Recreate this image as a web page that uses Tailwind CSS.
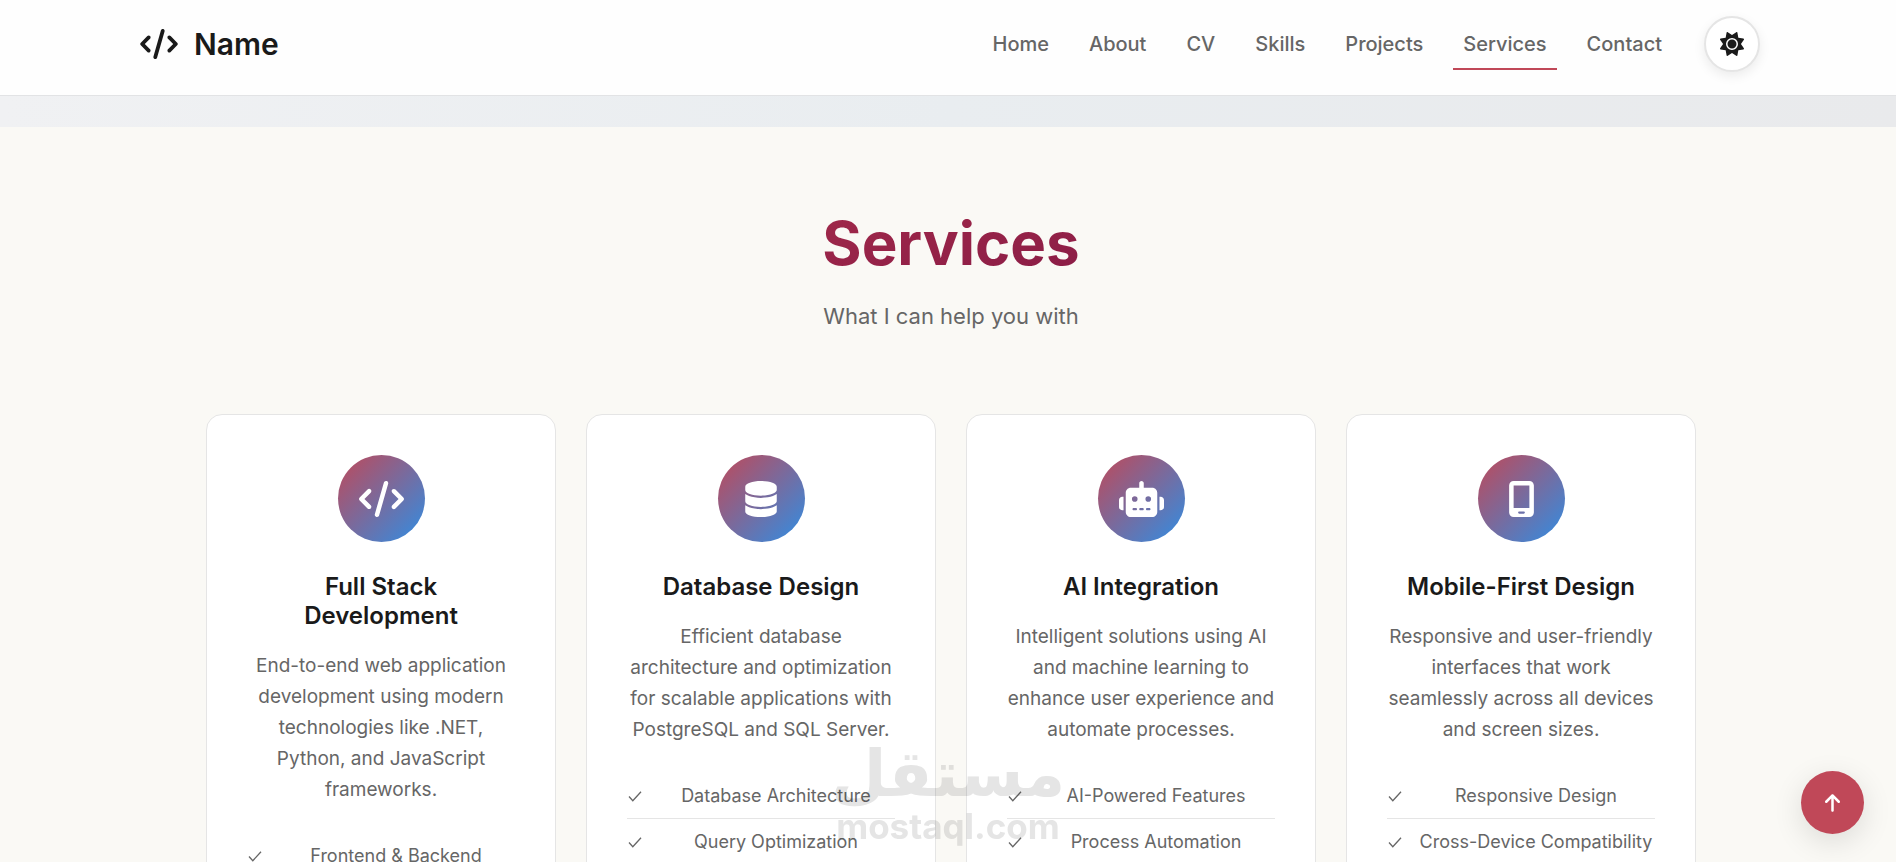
<!DOCTYPE html>
<html lang="en">
<head>
    <meta charset="UTF-8">
    <meta name="viewport" content="width=device-width, initial-scale=1.0">
    <title>Name - Services</title>
    <script src="https://cdn.jsdelivr.net/npm/@tailwindcss/browser@4"></script>
</head>
<body class="min-h-screen bg-[#faf9f5] font-['Inter',sans-serif] text-[#666666]">
    <!-- Icons -->
    <svg class="hidden">
        <symbol id="code" viewBox="0 0 640 512"><path d="M392.8 1.2c-17-4.9-34.7 5-39.6 22l-128 448c-4.9 17 5 34.7 22 39.6s34.7-5 39.6-22l128-448c4.9-17-5-34.7-22-39.6zm80.6 120.1c-12.5 12.5-12.5 32.8 0 45.3L562.7 256l-89.4 89.4c-12.5 12.5-12.5 32.8 0 45.3s32.8 12.5 45.3 0l112-112c12.5-12.5 12.5-32.8 0-45.3l-112-112c-12.5-12.5-32.8-12.5-45.3 0zm-306.7 0c-12.5-12.5-32.8-12.5-45.3 0l-112 112c-12.5 12.5-12.5 32.8 0 45.3l112 112c12.5 12.5 32.8 12.5 45.3 0s12.5-32.8 0-45.3L77.3 256l89.4-89.4c12.5-12.5 12.5-32.8 0-45.3z"/></symbol>
        <symbol id="check" viewBox="0 0 16 16"><path d="M2 8.500l3.800 4.200 8.200-9" fill="none" stroke="currentColor" stroke-width="1.300"/></symbol>
    </svg>

    <!-- Header -->
    <header class="border-b border-[#e2e3e5] bg-[#fefefe] pl-1">
        <div class="mx-auto flex h-[95px] max-w-[1620px] items-center justify-between pb-2">
            <a href="#" class="flex items-center gap-4 text-3xl font-semibold text-[#1a1a1a]">
                <svg class="h-[30px] w-[38px]" fill="currentColor"><use href="#code"/></svg>
                Name
            </a>
            <div class="flex items-center gap-8">
                <nav class="flex gap-5 text-xl font-medium">
                    <a href="#home" class="border-b-2 border-transparent px-[10px] pt-3 pb-[10px]">Home</a>
                    <a href="#about" class="border-b-2 border-transparent px-[10px] pt-3 pb-[10px]">About</a>
                    <a href="#cv" class="border-b-2 border-transparent px-[10px] pt-3 pb-[10px]">CV</a>
                    <a href="#skills" class="border-b-2 border-transparent px-[10px] pt-3 pb-[10px]">Skills</a>
                    <a href="#projects" class="border-b-2 border-transparent px-[10px] pt-3 pb-[10px]">Projects</a>
                    <a href="#services" class="border-b-2 border-[#c04858] px-[10px] pt-3 pb-[10px]">Services</a>
                    <a href="#contact" class="border-b-2 border-transparent px-[10px] pt-3 pb-[10px]">Contact</a>
                </nav>
                <button aria-label="Toggle theme" class="flex size-14 items-center justify-center rounded-full border-2 border-[#e5e5e5] bg-white text-[#1a1a1a] shadow-[0_4px_12px_rgba(0,0,0,0.08)]">
                    <svg class="size-6" viewBox="0 0 512 512" fill="currentColor"><path d="M361.5 1.2c5 2.1 8.6 6.6 9.6 11.9L391 121l107.9 19.8c5.3 1 9.8 4.6 11.9 9.6s1.5 10.7-1.6 15.2L446.9 256l62.3 90.3c3.1 4.5 3.7 10.2 1.6 15.2s-6.6 8.6-11.9 9.6L391 391 371.1 498.9c-1 5.3-4.6 9.8-9.6 11.9s-10.7 1.5-15.2-1.6L256 446.9l-90.3 62.3c-4.5 3.1-10.2 3.7-15.2 1.6s-8.6-6.6-9.6-11.9L121 391 13.1 371.1c-5.3-1-9.8-4.6-11.9-9.6s-1.5-10.7 1.6-15.2L65.1 256 2.8 165.7c-3.1-4.5-3.7-10.2-1.6-15.2s6.6-8.6 11.9-9.6L121 121 140.9 13.1c1-5.3 4.6-9.8 9.6-11.9s10.7-1.5 15.2 1.6L256 65.1 346.3 2.8c4.5-3.1 10.2-3.7 15.2-1.6zM160 256a96 96 0 1 1 192 0 96 96 0 1 1 -192 0zm224 0a128 128 0 1 0 -256 0 128 128 0 1 0 256 0z"/></svg>
                </button>
            </div>
        </div>
    </header>
    <div class="h-[31px] bg-linear-to-r/srgb from-[#f0f1f3] via-[#e9edf0] to-[#e9eaec]"></div>

    <!-- Services -->
    <section id="services" class="py-[80px] pl-[6px]">
        <div class="mx-auto max-w-[1490px]">
            <div class="mb-[80px] text-center">
                <h2 class="mx-auto mb-[20px] w-fit bg-linear-to-br/srgb from-[#a0294a] to-[#8a1c46] bg-clip-text text-[60px] leading-[72px] font-bold text-transparent">Services</h2>
                <p class="text-[22px] leading-[35px]">What I can help you with</p>
            </div>

            <div class="grid grid-cols-4 gap-[30px]">
                <div class="rounded-2xl border border-[#e5e5e5] bg-white p-10 text-center">
                    <div class="mx-auto mb-[30px] flex size-[87px] items-center justify-center rounded-full bg-linear-135/srgb from-[#c04858] to-[#308ee4] text-white">
                        <svg class="h-9 w-[45px]" fill="currentColor"><use href="#code"/></svg>
                    </div>
                    <h3 class="mb-[20px] text-2xl leading-[29px] font-semibold text-[#1a1a1a]">Full Stack Development</h3>
                    <p class="mb-7 text-[19px] leading-[31px]">End-to-end web application development using modern technologies like .NET, Python, and JavaScript frameworks.</p>
                    <ul class="text-lg leading-[29px]">
                        <li class="flex items-center gap-[14px] border-b border-[#e5e5e5] py-2"><svg class="size-4 shrink-0"><use href="#check"/></svg><span class="flex-1">Frontend &amp; Backend</span></li>
                        <li class="flex items-center gap-[14px] py-2"><svg class="size-4 shrink-0"><use href="#check"/></svg><span class="flex-1">API Development</span></li>
                    </ul>
                </div>

                <div class="rounded-2xl border border-[#e5e5e5] bg-white p-10 text-center">
                    <div class="mx-auto mb-[30px] flex size-[87px] items-center justify-center rounded-full bg-linear-135/srgb from-[#c04858] to-[#308ee4] text-white">
                        <svg class="h-9 w-8" viewBox="0 0 448 512" fill="currentColor"><path d="M448 80v48c0 44.2-100.3 80-224 80S0 172.2 0 128V80C0 35.8 100.3 0 224 0S448 35.8 448 80zM393.2 214.7c20.8-7.4 39.9-16.9 54.8-28.6V288c0 44.2-100.3 80-224 80S0 332.2 0 288V186.1c14.9 11.8 34 21.2 54.8 28.6C99.7 230.7 159.5 240 224 240s124.3-9.3 169.2-25.3zM0 346.1c14.9 11.8 34 21.2 54.8 28.6C99.7 390.7 159.5 400 224 400s124.3-9.3 169.2-25.3c20.8-7.4 39.9-16.9 54.8-28.6V432c0 44.2-100.3 80-224 80S0 476.2 0 432V346.1z"/></svg>
                    </div>
                    <h3 class="mb-[20px] text-2xl leading-[29px] font-semibold text-[#1a1a1a]">Database Design</h3>
                    <p class="mb-7 text-[19px] leading-[31px]">Efficient database architecture and optimization for scalable applications with PostgreSQL and SQL Server.</p>
                    <ul class="text-lg leading-[29px]">
                        <li class="flex items-center gap-[14px] border-b border-[#e5e5e5] py-2"><svg class="size-4 shrink-0"><use href="#check"/></svg><span class="flex-1">Database Architecture</span></li>
                        <li class="flex items-center gap-[14px] py-2"><svg class="size-4 shrink-0"><use href="#check"/></svg><span class="flex-1">Query Optimization</span></li>
                    </ul>
                </div>

                <div class="rounded-2xl border border-[#e5e5e5] bg-white p-10 text-center">
                    <div class="mx-auto mb-[30px] flex size-[87px] items-center justify-center rounded-full bg-linear-135/srgb from-[#c04858] to-[#308ee4] text-white">
                        <svg class="h-9 w-[45px]" viewBox="0 0 640 512" fill="currentColor"><path d="M320 0c17.7 0 32 14.3 32 32V96H472c39.8 0 72 32.2 72 72V440c0 39.8-32.2 72-72 72H168c-39.8 0-72-32.2-72-72V168c0-39.8 32.2-72 72-72H288V32c0-17.7 14.3-32 32-32zM208 384c-8.8 0-16 7.2-16 16s7.2 16 16 16h32c8.8 0 16-7.2 16-16s-7.2-16-16-16H208zm96 0c-8.8 0-16 7.2-16 16s7.2 16 16 16h32c8.8 0 16-7.2 16-16s-7.2-16-16-16H304zm96 0c-8.8 0-16 7.2-16 16s7.2 16 16 16h32c8.8 0 16-7.2 16-16s-7.2-16-16-16H400zM264 256a40 40 0 1 0 -80 0 40 40 0 1 0 80 0zm152 40a40 40 0 1 0 0-80 40 40 0 1 0 0 80zM48 224H64V416H48c-26.5 0-48-21.5-48-48V272c0-26.5 21.5-48 48-48zm544 0c26.5 0 48 21.5 48 48v96c0 26.5-21.5 48-48 48H576V224h16z"/></svg>
                    </div>
                    <h3 class="mb-[20px] text-2xl leading-[29px] font-semibold text-[#1a1a1a]">AI Integration</h3>
                    <p class="mb-7 text-[19px] leading-[31px]">Intelligent solutions using AI and machine learning to enhance user experience and automate processes.</p>
                    <ul class="text-lg leading-[29px]">
                        <li class="flex items-center gap-[14px] border-b border-[#e5e5e5] py-2"><svg class="size-4 shrink-0"><use href="#check"/></svg><span class="flex-1">AI-Powered Features</span></li>
                        <li class="flex items-center gap-[14px] py-2"><svg class="size-4 shrink-0"><use href="#check"/></svg><span class="flex-1">Process Automation</span></li>
                    </ul>
                </div>

                <div class="rounded-2xl border border-[#e5e5e5] bg-white p-10 text-center">
                    <div class="mx-auto mb-[30px] flex size-[87px] items-center justify-center rounded-full bg-linear-135/srgb from-[#c04858] to-[#308ee4] text-white">
                        <svg class="h-9 w-[27px]" viewBox="0 0 384 512" fill="currentColor"><path d="M16 64C16 28.7 44.7 0 80 0H304c35.3 0 64 28.7 64 64V448c0 35.3-28.7 64-64 64H80c-35.3 0-64-28.7-64-64V64zM144 448c0 8.8 7.2 16 16 16h64c8.8 0 16-7.2 16-16s-7.2-16-16-16H160c-8.8 0-16 7.2-16 16zM304 64H80V384H304V64z"/></svg>
                    </div>
                    <h3 class="mb-[20px] text-2xl leading-[29px] font-semibold text-[#1a1a1a]">Mobile-First Design</h3>
                    <p class="mb-7 text-[19px] leading-[31px]">Responsive and user-friendly interfaces that work seamlessly across all devices and screen sizes.</p>
                    <ul class="text-lg leading-[29px]">
                        <li class="flex items-center gap-[14px] border-b border-[#e5e5e5] py-2"><svg class="size-4 shrink-0"><use href="#check"/></svg><span class="flex-1">Responsive Design</span></li>
                        <li class="flex items-center gap-[14px] py-2"><svg class="size-4 shrink-0"><use href="#check"/></svg><span class="flex-1">Cross-Device Compatibility</span></li>
                    </ul>
                </div>
            </div>
        </div>
    </section>

    <!-- Watermark -->
    <div aria-hidden="true" class="pointer-events-none fixed inset-x-0 bottom-4 flex flex-col items-center font-bold text-[#e5e5e5] mix-blend-multiply">
        <span lang="ar" dir="rtl" class="font-['DejaVu_Sans',sans-serif] text-[64px] leading-[64px]">مستقل</span>
        <span class="text-[35px] leading-[40px]">mostaql.com</span>
    </div>

    <!-- Back to top -->
    <button aria-label="Back to top" class="fixed right-8 bottom-7 flex size-[63px] items-center justify-center rounded-full bg-[#c04858] text-white shadow-[0_8px_30px_rgba(0,0,0,0.12)]">
        <svg class="h-5 w-[15px]" viewBox="0 0 384 512" fill="currentColor"><path d="M214.6 41.4c-12.5-12.5-32.8-12.5-45.3 0l-160 160c-12.5 12.5-12.5 32.8 0 45.3s32.8 12.5 45.3 0L160 141.2V448c0 17.7 14.3 32 32 32s32-14.3 32-32V141.2L329.4 246.6c12.5 12.5 32.8 12.5 45.3 0s12.5-32.8 0-45.3l-160-160z"/></svg>
    </button>
</body>
</html>
